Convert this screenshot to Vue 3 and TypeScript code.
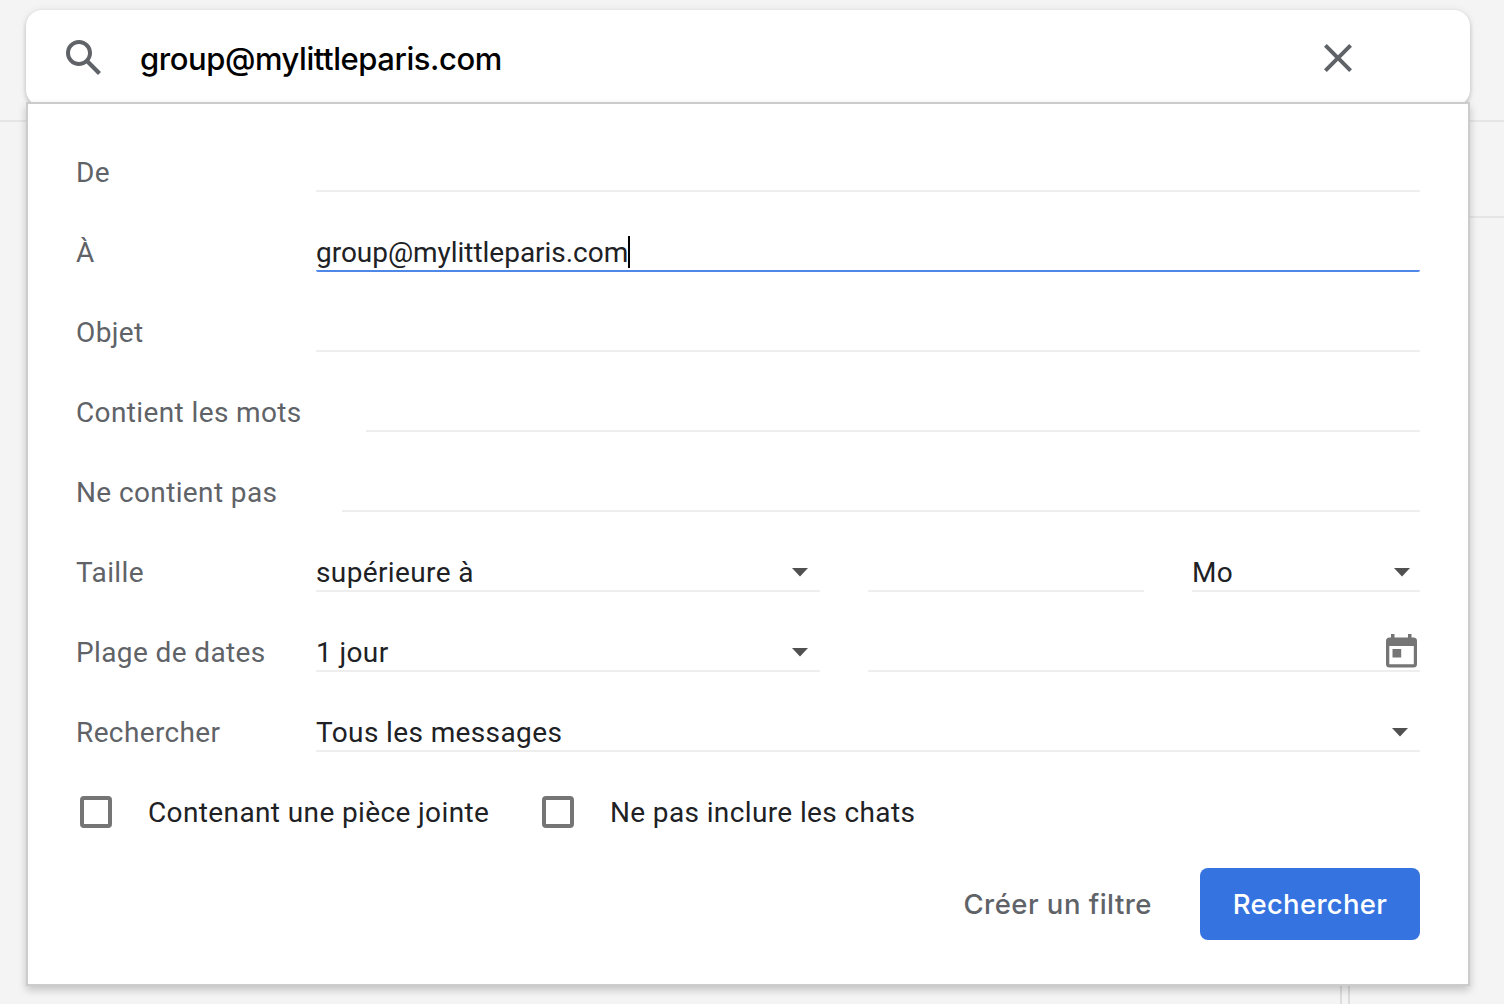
<script setup lang="ts">
import { ref } from 'vue'

interface TextRow {
  label: string
  gap: number
  value: string
  focused?: boolean
}

const query = ref('group@mylittleparis.com')

const textRows = ref<TextRow[]>([
  { label: 'De', gap: 240, value: '' },
  { label: 'À', gap: 240, value: 'group@mylittleparis.com', focused: true },
  { label: 'Objet', gap: 240, value: '' },
  { label: 'Contient les mots', gap: 290, value: '' },
  { label: 'Ne contient pas', gap: 266, value: '' },
])

const checks = ['Contenant une pièce jointe', 'Ne pas inclure les chats']
</script>

<template>
  <div class="page">
    <div class="backdrop" aria-hidden="true">
      <div class="toolbar-strip"></div>
      <div class="list-area">
        <div class="list-header"></div>
      </div>
      <div class="gutter"></div>
    </div>

    <header class="search-bar">
      <svg class="search-icon" viewBox="0 0 24 24" width="48" height="48">
        <path d="M20.49 19l-5.73-5.73C15.53 12.2 16 10.91 16 9.5A6.5 6.5 0 1 0 9.5 16c1.41 0 2.7-.47 3.77-1.24L19 20.49 20.49 19zM5 9.5C5 7.01 7.01 5 9.5 5S14 7.01 14 9.5 11.99 14 9.5 14 5 11.99 5 9.5z" />
      </svg>
      <span class="query">{{ query }}</span>
      <svg class="close-icon" viewBox="0 0 24 24" width="48" height="48">
        <path d="M19 6.41L17.59 5 12 10.59 6.41 5 5 6.41 10.59 12 5 17.59 6.41 19 12 13.41 17.59 19 19 17.59 13.41 12z" />
      </svg>
    </header>

    <form class="panel" @submit.prevent>
      <div v-for="row in textRows" :key="row.label" class="row">
        <label class="label" :style="{ width: row.gap + 'px' }">{{ row.label }}</label>
        <div class="field" :class="{ focused: row.focused }">
          <span v-if="row.value" class="typed">{{ row.value }}</span>
          <span v-if="row.focused" class="caret"></span>
        </div>
      </div>

      <div class="row">
        <label class="label">Taille</label>
        <div class="field select wide">
          <span>supérieure à</span>
          <svg class="arrow" viewBox="0 0 16 9" width="16" height="9"><path d="M0 0h16L8 8.500z" /></svg>
        </div>
        <div class="field amount"></div>
        <div class="field select unit">
          <span>Mo</span>
          <svg class="arrow" viewBox="0 0 16 9" width="16" height="9"><path d="M0 0h16L8 8.500z" /></svg>
        </div>
      </div>

      <div class="row">
        <label class="label">Plage de dates</label>
        <div class="field select wide">
          <span>1 jour</span>
          <svg class="arrow" viewBox="0 0 16 9" width="16" height="9"><path d="M0 0h16L8 8.500z" /></svg>
        </div>
        <div class="field date">
          <svg class="calendar" viewBox="0 0 32 34" width="32" height="34">
            <path fill-rule="evenodd" d="M5 0h3.500v3.500H22V0h3.500v3.500h2A3.500 3.500 0 0 1 31 7v23a3.500 3.500 0 0 1-3.500 3.500h-24A3.500 3.500 0 0 1 0 30V7a3.500 3.500 0 0 1 3.500-3.500H5zM3.300 12v18.300h24.500V12zM6.500 15h8.700v8.500H6.500z" />
          </svg>
        </div>
      </div>

      <div class="row">
        <label class="label">Rechercher</label>
        <div class="field select scope">
          <span>Tous les messages</span>
          <svg class="arrow" viewBox="0 0 16 9" width="16" height="9"><path d="M0 0h16L8 8.500z" /></svg>
        </div>
      </div>

      <div class="checks">
        <label v-for="text in checks" :key="text" class="check">
          <span class="box"></span>
          <span>{{ text }}</span>
        </label>
      </div>

      <div class="actions">
        <button type="button" class="filter">Créer un filtre</button>
        <button type="submit" class="submit">Rechercher</button>
      </div>
    </form>
  </div>
</template>

<style>
body {
  margin: 0;
  overflow: hidden;
}
</style>

<style scoped>
.page {
  position: relative;
  box-sizing: border-box;
  width: 1504px;
  height: 1004px;
  padding: 10px 34px 0 26px;
  overflow: hidden;
  background: #f4f4f4;
  font-family: Roboto, "Liberation Sans", sans-serif;
  font-size: 28px;
  letter-spacing: 0.38px;
  color: #202124;
}

.backdrop {
  position: absolute;
  inset: 0;
  display: flex;
  flex-direction: column;
}

.toolbar-strip {
  height: 120px;
  border-bottom: 2px solid #e5e5e5;
}

.list-area {
  height: 864px;
}

.list-header {
  height: 94px;
  margin-left: 40px;
  border-bottom: 2px solid #e5e5e5;
}

.gutter {
  width: 6px;
  height: 18px;
  margin-left: 1340px;
  border: solid #dcdcdc;
  border-width: 0 2px;
}

.search-bar {
  position: relative;
  display: flex;
  align-items: center;
  box-sizing: border-box;
  height: 96px;
  padding: 0 108px 0 34px;
  background: #fff;
  border-radius: 16px;
  box-shadow: 0 2px 4px rgba(0, 0, 0, 0.22), 0 0 10px rgba(0, 0, 0, 0.06);
}

.search-icon,
.close-icon {
  flex: none;
  fill: #5f6368;
}

.query {
  flex: 1;
  padding: 2px 0 0 32px;
  color: #000;
  font-family: Inter, Roboto, sans-serif;
  font-size: 31px;
  font-weight: 500;
  font-variant-ligatures: none;
  letter-spacing: -0.44px;
  line-height: 40px;
}

.panel {
  position: relative;
  box-sizing: border-box;
  width: 1444px;
  height: 884px;
  margin-top: -4px;
  padding: 8px 48px 0;
  background: #fff;
  border: 2px solid #ccc;
  box-shadow: 0 4px 8px rgba(0, 0, 0, 0.2);
}

.row {
  display: flex;
  align-items: flex-end;
  height: 80px;
}

.label {
  flex: none;
  width: 240px;
  height: 38px;
  color: #5f6368;
  line-height: 38px;
  white-space: nowrap;
}

.field {
  display: flex;
  flex: 1;
  align-items: center;
  box-sizing: border-box;
  height: 38px;
  border-bottom: 2px solid #eee;
  line-height: 36px;
}

.field > span:not(.caret) {
  padding-top: 2px;
}

.focused {
  border-color: #4f87e8;
  border-radius: 2px;
}

.field .typed {
  letter-spacing: -0.03px;
}

.caret {
  width: 2px;
  height: 32px;
  background: #000;
}

.select {
  justify-content: space-between;
}

.select .arrow {
  margin: 0 12px 0 0;
  fill: #505050;
}

.wide {
  flex: 0 0 504px;
}

.amount {
  flex: 0 0 276px;
  margin-left: 48px;
}

.unit {
  margin-left: 48px;
}

.unit .arrow {
  margin-right: 10px;
}

.date {
  justify-content: flex-end;
  margin-left: 48px;
}

.calendar {
  margin: 0 2px 3px 0;
  fill: #757575;
}

.checks {
  display: flex;
  gap: 52.6px;
  height: 32px;
  padding: 44px 0 0 4px;
}

.check {
  display: flex;
  gap: 36px;
  line-height: 34px;
}

.box {
  box-sizing: border-box;
  width: 32px;
  height: 32px;
  border: 4px solid #757575;
  border-radius: 4px;
}

.actions {
  display: flex;
  justify-content: flex-end;
  gap: 16px;
  margin-top: 40px;
}

.actions button {
  height: 72px;
  padding: 0 32px;
  border: 0;
  border-radius: 8px;
  font-family: Inter, Roboto, sans-serif;
  font-size: 27.5px;
  font-weight: 500;
  letter-spacing: 0.48px;
  white-space: nowrap;
}

.actions .filter {
  background: transparent;
  color: #5f6368;
}

.actions .submit {
  width: 220px;
  background: #3574e0;
  color: #fff;
  letter-spacing: 0.3px;
}
</style>
